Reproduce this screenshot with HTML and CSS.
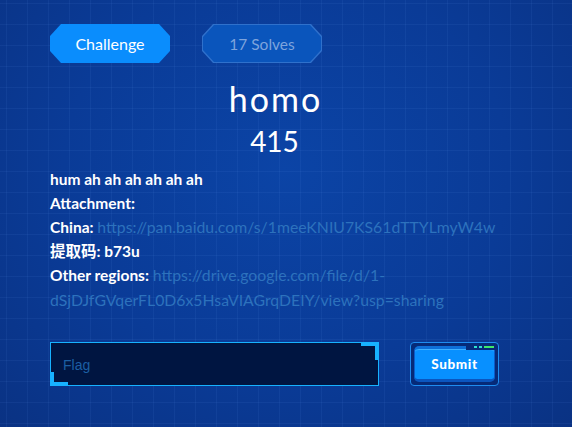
FILE: index.html
```html
<!DOCTYPE html>
<html>
<head>
<meta charset="utf-8">
<link rel="stylesheet" href="styles.css">
</head>
<body>
<div class="page">
  <div class="tabs">
    <div class="tab tab-active"><span>Challenge</span></div>
    <div class="tab tab-ghost"><div class="tab-inner"><span>17 Solves</span></div></div>
  </div>
  <h1 class="title">homo</h1>
  <div class="points">415</div>
  <div class="desc">
    <p>hum ah ah ah ah ah ah</p>
    <p>Attachment:</p>
    <p>China: <a class="link">https://pan.baidu.com/s/1meeKNIU7KS61dTTYLmyW4w</a></p>
    <p>提取码: b73u</p>
    <p>Other regions: <a class="link">https://drive.google.com/file/d/1-dSjDJfGVqerFL0D6x5HsaVIAGrqDEIY/view?usp=sharing</a></p>
  </div>
  <div class="form">
    <div class="flag">
      <span class="placeholder">Flag</span>
      <span class="corner corner-tr"></span>
      <span class="corner corner-bl"></span>
    </div>
    <div class="submit-wrap">
      <div class="submit">Submit
        <span class="leds"><i class="led"></i><i class="led"></i><i class="led led-long"></i></span>
      </div>
    </div>
  </div>
</div>
</body>
</html>
```
FILE: styles.css
```css
html, body { margin: 0; padding: 0; }
body {
  width: 572px;
  height: 427px;
  overflow: hidden;
  font-family: "Lato", "Noto Sans CJK SC", sans-serif;
  color: #fff;
  background-color: #0a3a94;
  background-image:
    linear-gradient(rgba(120,170,255,0.07) 1px, transparent 1px),
    linear-gradient(90deg, rgba(120,170,255,0.07) 1px, transparent 1px),
    radial-gradient(ellipse at 50% 40%, #0b44a6 0%, #0a3b97 55%, #0a3283 100%);
  background-size: 21px 21px, 21px 21px, 100% 100%;
  background-position: 6px 3px, 6px 3px, 0 0;
}
.page { padding: 24px 0 0 50px; width: 449px; }
.tabs { display: flex; gap: 32px; }
.tab {
  width: 120px;
  height: 39px;
  display: flex;
  align-items: center;
  justify-content: center;
  clip-path: polygon(11px 0, calc(100% - 11px) 0, 100% 12px, 100% calc(100% - 12px), calc(100% - 11px) 100%, 11px 100%, 0 calc(100% - 12px), 0 12px);
}
.tab-active { background: #0a8dfd; color: #fff; font-size: 16px; }
.tab-ghost { background: #2f71cc; padding: 1px; box-sizing: border-box; font-size: 15.5px; }
.tab-inner {
  width: 100%; height: 100%;
  display: flex; align-items: center; justify-content: center;
  background: #0a55bc;
  color: #7ea4dc;
  clip-path: polygon(11px 0, calc(100% - 11px) 0, 100% 12px, 100% calc(100% - 12px), calc(100% - 11px) 100%, 11px 100%, 0 calc(100% - 12px), 0 12px);
}
.title {
  margin: 16px 0 0 0;
  text-align: center;
  font-weight: 400;
  font-size: 34px;
  letter-spacing: 2px;
  line-height: 40px;
  padding-left: 2px;
}
.points {
  text-align: center;
  font-size: 28px;
  line-height: 34px;
  margin-top: 5px;
}
.desc {
  margin-top: 10px;
  font-size: 15.5px;
  font-weight: 700;
  line-height: 23.6px;
  width: 470px;
}
.desc p { margin: 0; }
.link { color: #2d72bd; font-weight: 400; font-size: 15.8px; }
.form { display: flex; gap: 31px; margin-top: 29px; }
.flag {
  position: relative;
  width: 329px;
  height: 44px;
  box-sizing: border-box;
  border: 1px solid #17b2ff;
  background: #001541;
  display: flex;
  align-items: center;
  padding-left: 12px;
}
.placeholder {
  font-family: "Liberation Sans", Arial, sans-serif;
  font-size: 14px;
  color: #1c5fa3;
  margin-top: 2px;
}
.corner { position: absolute; border-color: #17b2ff; border-style: solid; }
.corner-tr { top: 0; right: 0; width: 14px; height: 14px; border-width: 3px 3px 0 0; }
.corner-bl { bottom: 0; left: 0; width: 14px; height: 10px; border-width: 0 0 3px 3px; }
.submit-wrap {
  width: 89px;
  height: 44px;
  box-sizing: border-box;
  border: 1px solid #1e8cf0;
  border-radius: 4px;
  padding: 3px;
  background: #062a78;
}
.submit {
  position: relative;
  height: 100%;
  box-sizing: border-box;
  border-radius: 5px;
  background: #0890ff;
  border: 1px solid #0a5cc8;
  border-top: 3px solid #0d6fd9;
  border-bottom: 3px solid #0b56c0;
  box-shadow: inset 0 1px 0 #3fb0ff;
  display: flex;
  align-items: center;
  justify-content: center;
  font-family: "Lato", sans-serif;
  font-weight: 900;
  font-size: 13.5px;
  letter-spacing: 0.6px;
  color: #fff;
}
.leds {
  position: absolute;
  top: -5px;
  right: -2px;
  height: 6px;
  padding: 0 2px 0 8px;
  background: #062a78;
  display: flex;
  align-items: center;
  gap: 2px;
}
.led { display: block; width: 3px; height: 2px; background: #2de0d0; }
.led-long { width: 10px; background: #3ee86a; }
```
